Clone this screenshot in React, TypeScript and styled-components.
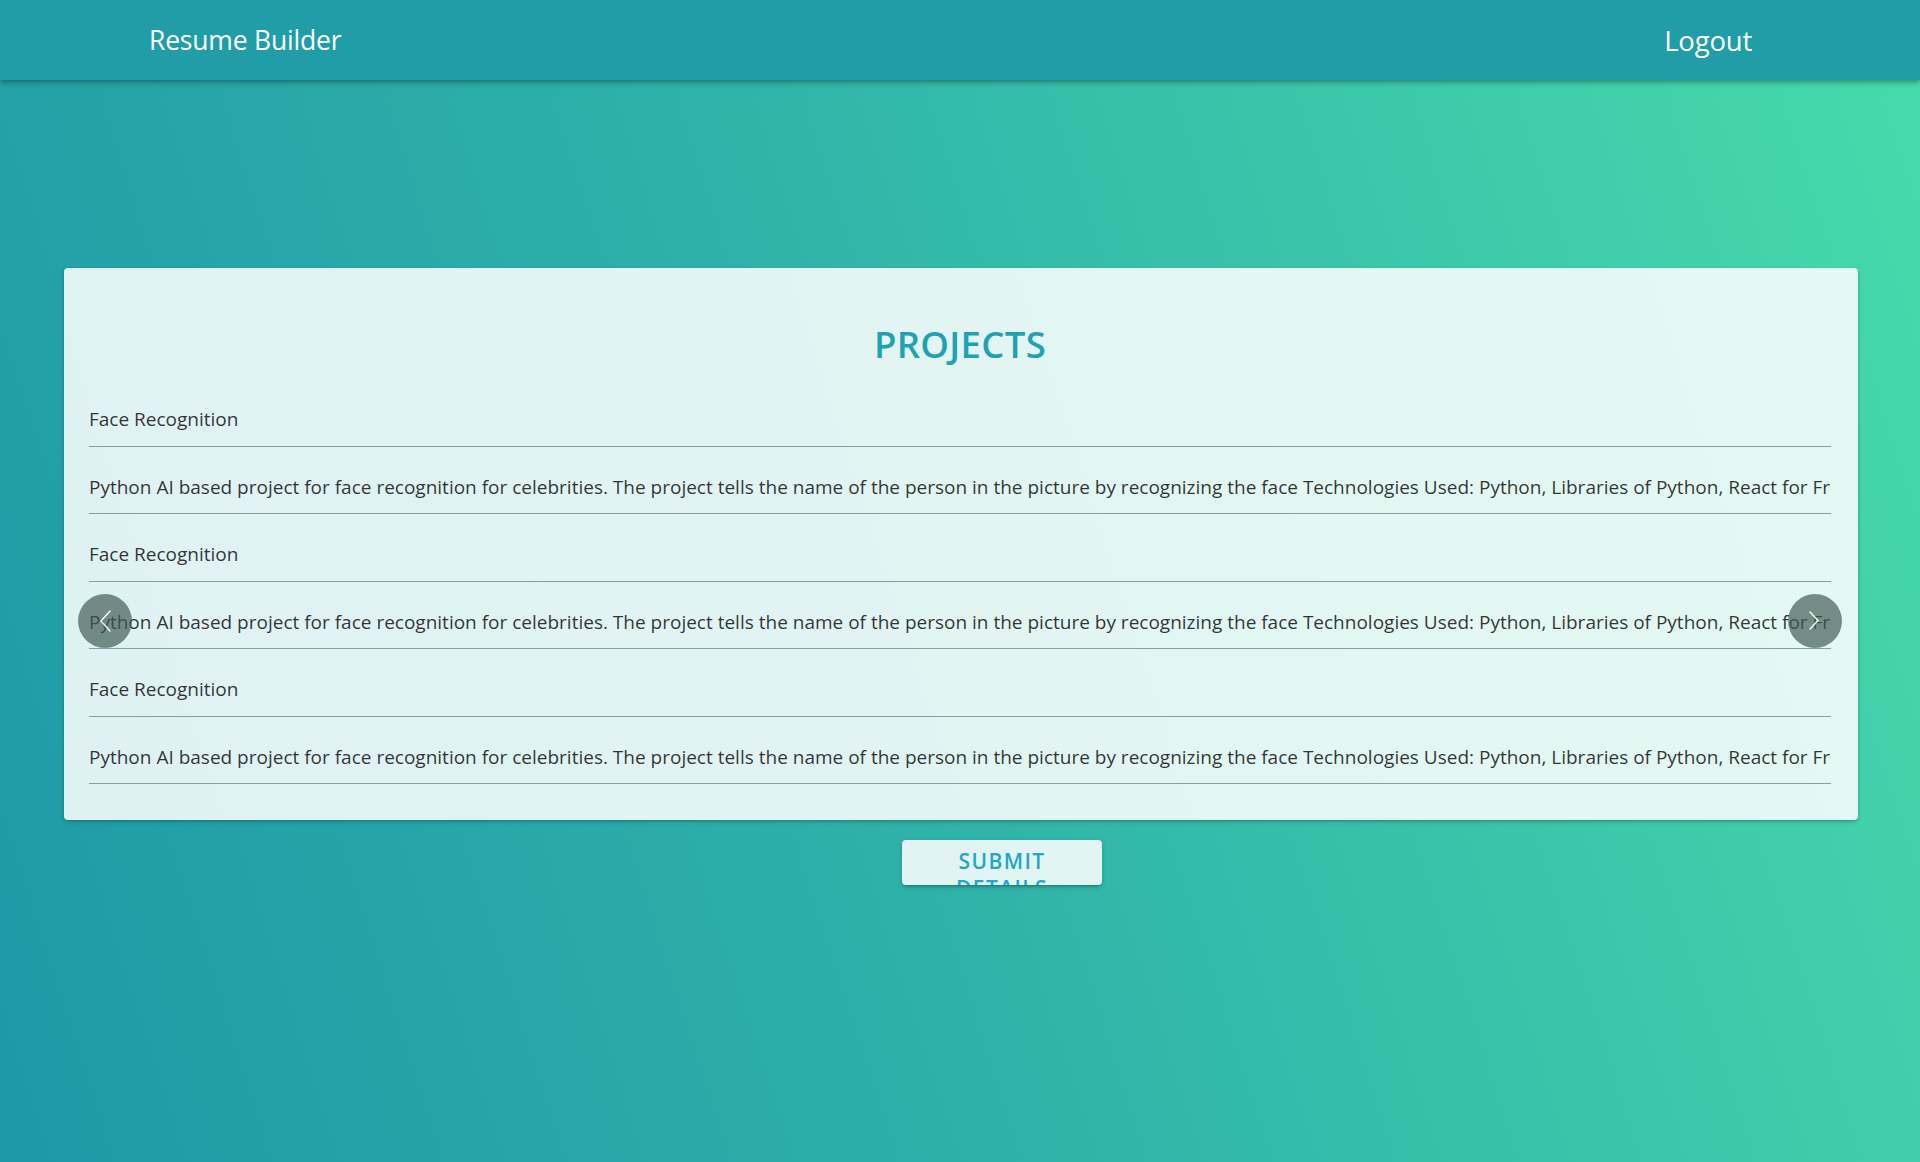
import React from "react";
import styled, { createGlobalStyle } from "styled-components";

const GlobalStyle = createGlobalStyle`
  html, body, #root { height: 100%; }
  body {
    margin: 0;
    font-family: "Open Sans", "Noto Sans", "Liberation Sans", sans-serif;
    background: linear-gradient(72deg, #1d99a6 0%, #2fb2a9 45%, #47dbab 100%);
    background-attachment: fixed;
    overflow: hidden;
  }
  * { box-sizing: border-box; }
`;

const Page = styled.div`
  min-height: 100%;
  display: flex;
  flex-direction: column;
`;

const Header = styled.header`
  height: 80px;
  flex-shrink: 0;
  background: #209da6;
  box-shadow: 0 2px 4px -1px rgba(0, 0, 0, 0.25), 0 4px 5px 0 rgba(0, 0, 0, 0.14);
  display: flex;
  align-items: center;
  justify-content: space-between;
  padding: 0 168px 0 149px;
  position: relative;
  z-index: 2;
`;

const Brand = styled.div`
  color: #ffffff;
  font-size: 26.5px;
  letter-spacing: -0.2px;
`;

const HeaderLink = styled.button`
  background: none;
  border: none;
  padding: 0;
  color: #ffffff;
  font-family: inherit;
  font-size: 27.5px;
  letter-spacing: -0.2px;
  cursor: pointer;
`;

const Main = styled.main`
  position: relative;
  flex: 1;
  padding-top: 188px;
`;

const Card = styled.section`
  margin: 0 62px 0 64px;
  padding: 54px 27px 36px 25px;
  background: rgba(255, 255, 255, 0.86);
  border-radius: 4px;
  box-shadow: 0 2px 4px rgba(0, 0, 0, 0.18), 0 1px 2px rgba(0, 0, 0, 0.12);
`;

const Title = styled.h2`
  margin: 0 0 13px;
  text-align: center;
  color: #1fa2b4;
  font-size: 36.5px;
  font-weight: 600;
  line-height: 44px;
  letter-spacing: 0.3px;
`;

const Field = styled.div`
  padding: 26px 0 12.5px;
  border-bottom: 1px solid #86a09e;
`;

const FieldInput = styled.input`
  display: block;
  width: 100%;
  border: none;
  outline: none;
  background: transparent;
  padding: 0;
  margin: 0;
  height: 28px;
  line-height: 28px;
  font-family: inherit;
  font-size: 19px;
  color: rgba(0, 0, 0, 0.8);
`;

const Arrow = styled.button<{ $side: "left" | "right" }>`
  position: absolute;
  top: 50%;
  ${(p) => (p.$side === "left" ? "left: 78px;" : "right: 78px;")}
  width: 54px;
  height: 54px;
  margin-top: -27px;
  border-radius: 50%;
  border: none;
  padding: 0;
  background: rgba(62, 88, 82, 0.68);
  display: flex;
  align-items: center;
  justify-content: center;
  cursor: pointer;
  z-index: 1;
`;

const ButtonRow = styled.div`
  display: flex;
  justify-content: center;
  padding: 20px 0 0 84px;
`;

const SubmitButton = styled.button`
  width: 200px;
  height: 45px;
  padding: 8px 16px 0;
  overflow: hidden;
  border: none;
  border-radius: 4px;
  background: rgba(255, 255, 255, 0.86);
  box-shadow: 0 3px 3px -2px rgba(0, 0, 0, 0.25), 0 2px 5px 0 rgba(0, 0, 0, 0.16);
  font-family: inherit;
  font-size: 21px;
  font-weight: 600;
  line-height: 27px;
  letter-spacing: 1.4px;
  color: #22a6cc;
  text-align: center;
  display: block;
  cursor: pointer;
`;

const Chevron = ({ dir }: { dir: "left" | "right" }) => (
  <svg width="14" height="24" viewBox="0 0 14 24" fill="none">
    <polyline
      points={dir === "left" ? "12,2 3,12 12,22" : "2,3 10,11.5 2,20"}
      stroke="rgba(255,255,255,0.9)"
      strokeWidth="1.6"
      strokeLinecap="round"
      strokeLinejoin="round"
    />
  </svg>
);

const description =
  "Python AI based project for face recognition for celebrities. The project tells the name of the person in the picture by recognizing the face Technologies Used: Python, Libraries of Python, React for Frontend";

const projects = [
  { title: "Face Recognition", description },
  { title: "Face Recognition", description },
  { title: "Face Recognition", description },
];

export default function App() {
  return (
    <>
      <GlobalStyle />
      <Page>
        <Header>
          <Brand>Resume Builder</Brand>
          <HeaderLink>Logout</HeaderLink>
        </Header>
        <Main>
          <Arrow $side="left" aria-label="previous">
            <Chevron dir="left" />
          </Arrow>
          <Card>
            <Title>PROJECTS</Title>
            {projects.map((p, i) => (
              <React.Fragment key={i}>
                <Field>
                  <FieldInput defaultValue={p.title} />
                </Field>
                <Field>
                  <FieldInput defaultValue={p.description} />
                </Field>
              </React.Fragment>
            ))}
          </Card>
          <ButtonRow>
            <SubmitButton>SUBMIT DETAILS</SubmitButton>
          </ButtonRow>
          <Arrow $side="right" aria-label="next">
            <Chevron dir="right" />
          </Arrow>
        </Main>
      </Page>
    </>
  );
}
